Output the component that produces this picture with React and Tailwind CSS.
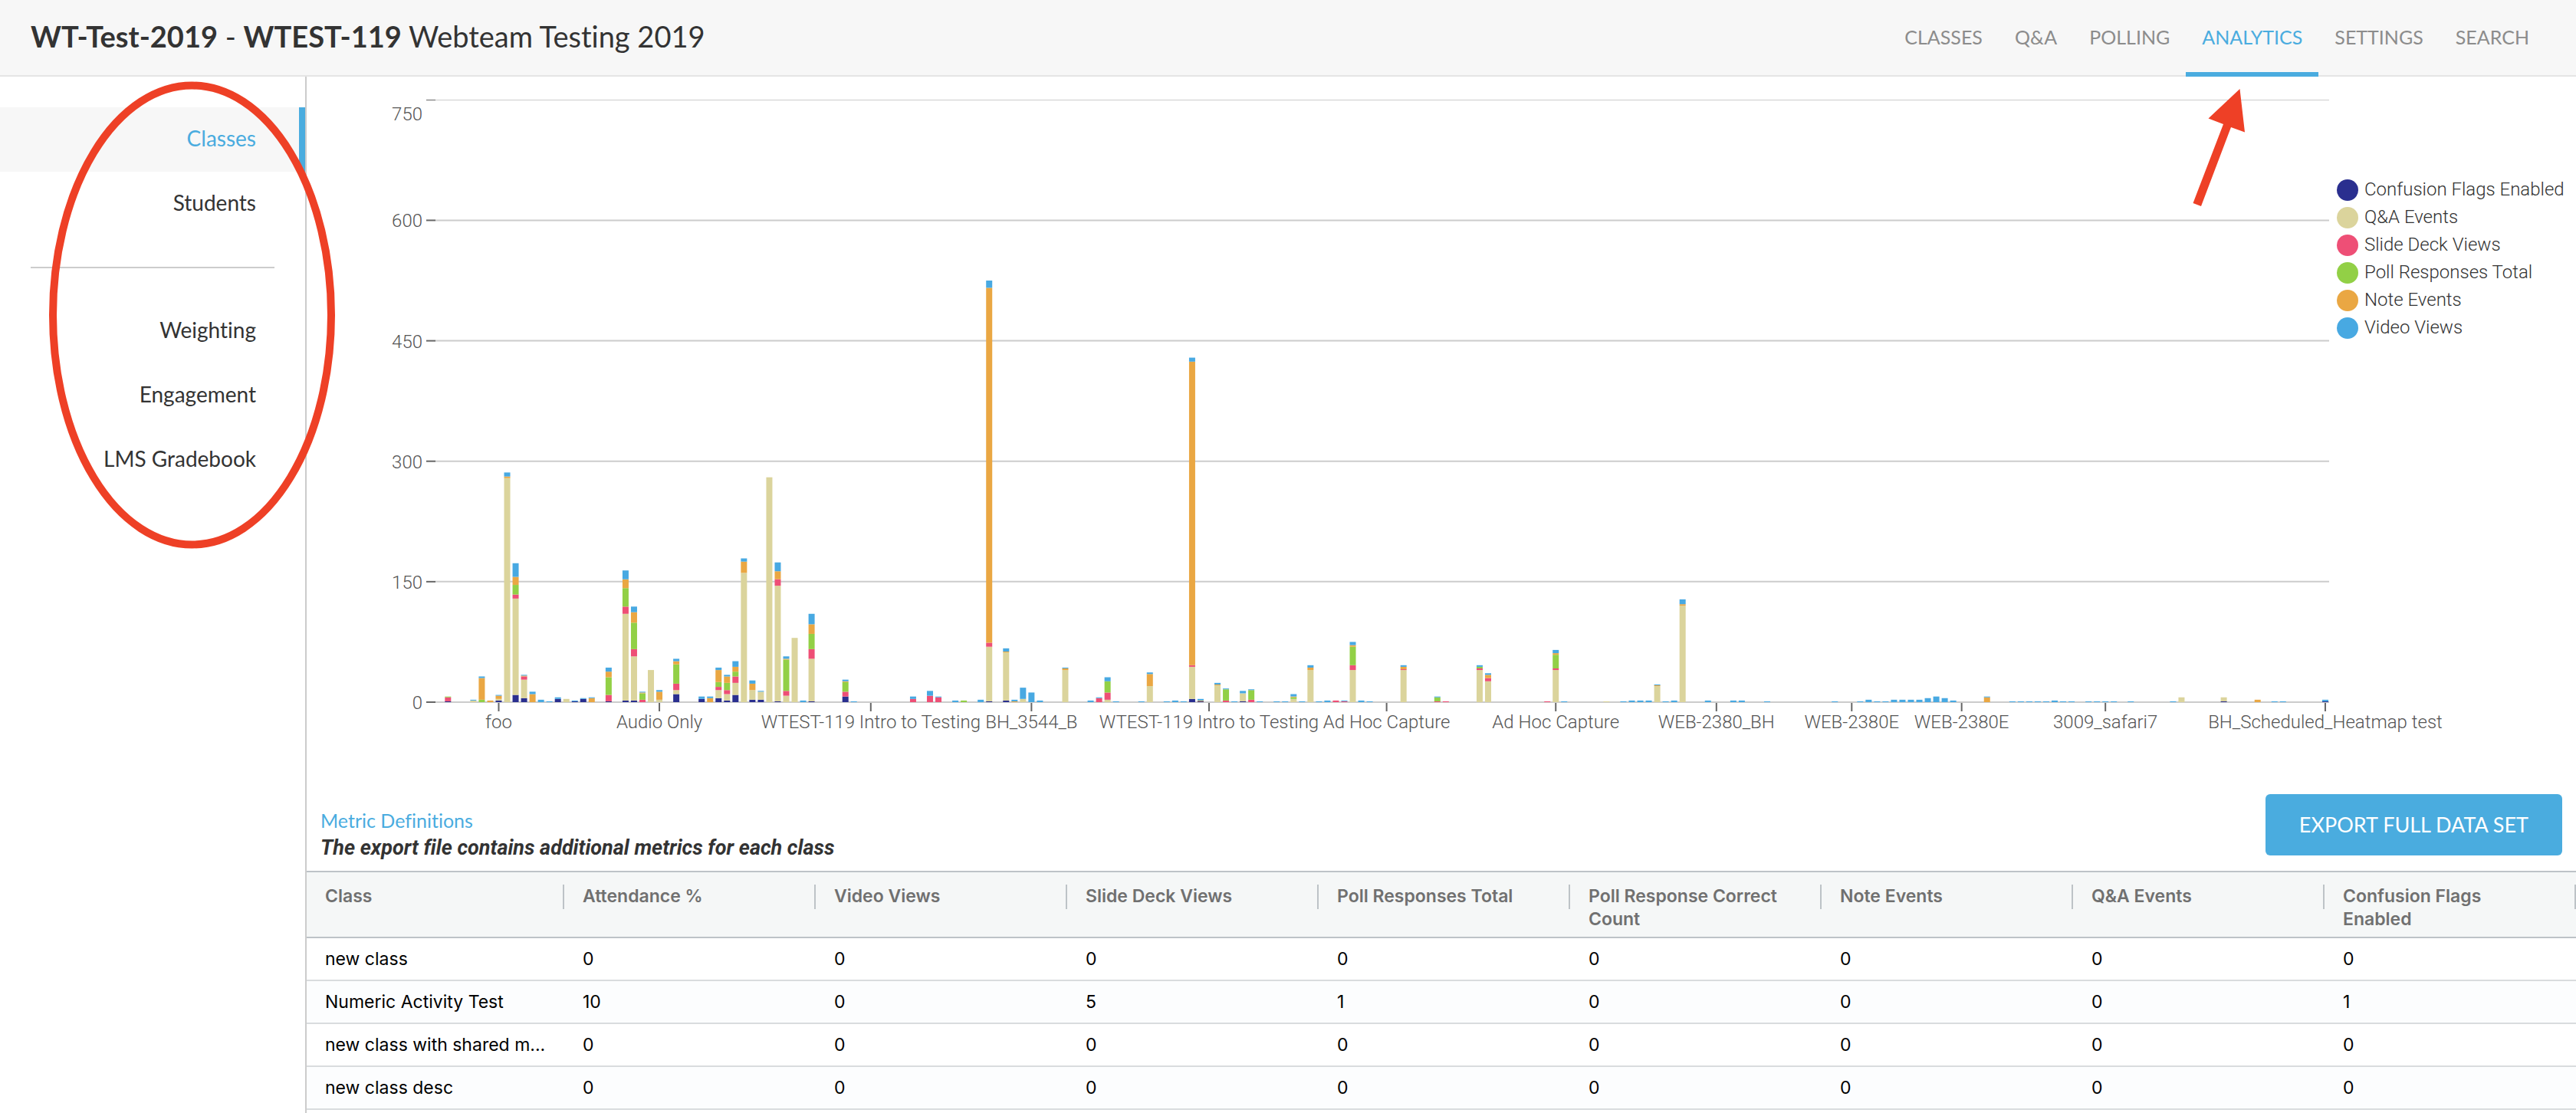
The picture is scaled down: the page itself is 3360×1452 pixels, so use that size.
const COLORS = ["#2a2f8f", "#dbd49c", "#ee4f76", "#92d046", "#eaa743", "#48a9e2"];
const LEGEND = ["Confusion Flags Enabled", "Q&A Events", "Slide Deck Views", "Poll Responses Total", "Note Events", "Video Views"];

// Each entry: [class index, confusion flags, Q&A, slide views, poll responses, notes, videos]
const BARS = [
  [0, 1, 0, 5, 1, 0, 0], [3, 0, 2, 0, 0, 0, 1], [4, 0, 0, 0, 3, 27, 2], [5, 0, 0, 0, 0, 2, 0],
  [6, 2, 2, 0, 0, 4, 1], [7, 0, 279, 0, 0, 2, 5], [8, 9, 120, 5, 12, 10, 17], [9, 5, 23, 4, 0, 1, 1],
  [10, 0, 0, 0, 0, 10, 3], [11, 0, 0, 0, 0, 0, 3], [12, 0, 0, 0, 0, 0, 1], [13, 4, 0, 0, 0, 0, 2],
  [14, 0, 4, 0, 0, 0, 0], [15, 1, 0, 0, 0, 0, 1], [16, 4, 0, 0, 0, 0, 1], [17, 0, 0, 0, 0, 5, 1],
  [19, 1, 0, 8, 22, 7, 5], [21, 2, 108, 9, 23, 11, 11], [22, 2, 55, 9, 33, 13, 7], [23, 0, 0, 3, 8, 1, 1],
  [24, 0, 40, 0, 0, 0, 0], [25, 0, 3, 0, 0, 10, 2], [27, 10, 5, 8, 24, 4, 3], [30, 4, 0, 0, 0, 0, 3],
  [31, 0, 0, 0, 0, 5, 2], [32, 5, 10, 4, 6, 15, 3], [33, 2, 8, 5, 9, 8, 2], [34, 9, 15, 8, 6, 6, 7],
  [35, 0, 161, 0, 0, 14, 4], [36, 3, 12, 0, 0, 8, 4], [37, 3, 10, 0, 0, 0, 1], [38, 0, 280, 0, 0, 0, 0],
  [39, 1, 144, 8, 0, 10, 11], [40, 0, 8, 6, 39, 1, 3], [41, 0, 80, 0, 0, 0, 0], [42, 0, 0, 0, 0, 0, 2],
  [43, 1, 53, 12, 19, 12, 13], [47, 7, 0, 6, 12, 1, 2], [48, 0, 0, 0, 0, 0, 1], [55, 0, 0, 4, 0, 0, 3],
  [57, 0, 0, 8, 0, 0, 6], [58, 0, 0, 6, 0, 0, 1], [60, 0, 0, 0, 0, 0, 2], [61, 0, 0, 0, 2, 0, 0],
  [63, 0, 0, 0, 0, 0, 3], [64, 1, 68, 5, 0, 442, 9], [66, 2, 60, 0, 0, 1, 4], [67, 0, 0, 0, 0, 1, 2],
  [68, 0, 4, 0, 0, 0, 14], [69, 0, 0, 0, 0, 0, 12], [70, 0, 0, 0, 0, 0, 2], [73, 0, 40, 0, 0, 2, 1],
  [76, 0, 0, 0, 0, 0, 2], [77, 0, 0, 5, 0, 0, 1], [78, 0, 3, 9, 14, 0, 5], [79, 0, 0, 0, 0, 0, 1],
  [82, 0, 0, 0, 0, 0, 1], [83, 0, 20, 0, 0, 15, 2], [85, 0, 0, 0, 0, 0, 1], [86, 0, 0, 0, 0, 0, 2],
  [87, 0, 0, 0, 0, 0, 1], [88, 4, 40, 2, 0, 378, 5], [89, 1, 0, 0, 0, 1, 2], [91, 0, 21, 0, 0, 1, 2],
  [92, 0, 0, 2, 14, 0, 1], [93, 0, 0, 0, 0, 0, 1], [94, 1, 10, 0, 0, 0, 3], [95, 0, 0, 3, 12, 0, 1],
  [96, 0, 0, 0, 0, 0, 1], [98, 0, 0, 0, 0, 0, 1], [99, 0, 0, 0, 0, 0, 1], [100, 0, 4, 0, 2, 1, 3],
  [101, 0, 0, 0, 0, 0, 1], [102, 0, 40, 0, 0, 3, 3], [103, 0, 0, 0, 0, 0, 1], [104, 0, 0, 0, 0, 0, 2],
  [105, 0, 0, 2, 0, 0, 0], [106, 0, 0, 1, 0, 0, 1], [107, 0, 40, 6, 23, 2, 4], [108, 0, 0, 0, 0, 0, 2],
  [109, 0, 0, 0, 0, 0, 1], [113, 0, 40, 1, 0, 3, 2], [117, 0, 0, 1, 5, 0, 1], [118, 0, 0, 1, 0, 0, 0],
  [122, 0, 40, 2, 2, 0, 2], [123, 0, 26, 4, 0, 4, 2], [130, 0, 0, 1, 0, 0, 0], [131, 0, 40, 2, 17, 2, 4],
  [132, 0, 0, 0, 0, 0, 1], [137, 0, 1, 0, 0, 0, 0], [139, 0, 0, 0, 0, 0, 1], [140, 0, 0, 0, 0, 0, 2],
  [141, 0, 0, 0, 0, 0, 2], [142, 0, 0, 0, 0, 0, 2], [143, 0, 20, 0, 0, 1, 1], [144, 0, 0, 0, 0, 0, 1],
  [145, 0, 0, 0, 0, 0, 2], [146, 0, 120, 0, 0, 2, 6], [149, 0, 0, 0, 0, 0, 2], [152, 0, 0, 0, 0, 0, 2],
  [153, 0, 0, 0, 0, 0, 2], [156, 0, 0, 0, 0, 0, 1], [164, 0, 0, 0, 0, 0, 1], [167, 0, 0, 0, 0, 0, 1],
  [168, 0, 0, 0, 0, 0, 3], [169, 0, 0, 0, 0, 0, 1], [170, 0, 0, 0, 0, 0, 1], [171, 0, 0, 0, 0, 0, 3],
  [172, 0, 0, 0, 0, 0, 3], [173, 0, 0, 0, 0, 0, 3], [174, 0, 0, 0, 0, 0, 3], [175, 0, 0, 0, 0, 0, 5],
  [176, 0, 0, 0, 0, 0, 7], [177, 0, 0, 0, 0, 0, 5], [178, 0, 0, 0, 0, 0, 2], [182, 0, 0, 0, 0, 6, 1],
  [185, 0, 0, 0, 0, 0, 1], [186, 0, 0, 0, 0, 0, 1], [187, 0, 0, 0, 0, 0, 1], [188, 0, 0, 0, 0, 0, 1],
  [189, 0, 0, 0, 0, 0, 1], [190, 0, 0, 0, 0, 0, 2], [191, 0, 0, 0, 0, 0, 1], [192, 0, 0, 0, 0, 0, 1],
  [194, 0, 0, 0, 0, 0, 1], [195, 0, 0, 0, 0, 0, 1], [196, 0, 0, 0, 0, 0, 1], [197, 0, 0, 0, 0, 0, 1],
  [199, 0, 0, 0, 0, 0, 1], [204, 0, 0, 0, 0, 0, 1], [205, 0, 6, 0, 0, 0, 0], [210, 1, 5, 0, 0, 0, 0],
  [214, 0, 0, 0, 0, 3, 0], [216, 0, 0, 0, 0, 0, 1], [217, 0, 0, 0, 0, 0, 1], [222, 1, 0, 0, 0, 0, 2],
];

const X_LABELS = [
  [6, "foo"], [25, "Audio Only"], [50, "WTEST-119 Intro to Testing"], [69, "BH_3544_B"],
  [90, "WTEST-119 Intro to Testing"], [111, "Ad Hoc Capture"], [131, "Ad Hoc Capture"],
  [150, "WEB-2380_BH"], [166, "WEB-2380E"], [179, "WEB-2380E"], [196, "3009_safari7"],
  [222, "BH_Scheduled_Heatmap test"],
];

const BASE = 816;
const UNIT = 1.0476;
const xOf = (i) => 184.3 + i * 11.03;
const yOf = (v) => BASE - v * UNIT;

function Chart() {
  return (
    <svg viewBox="0 0 2640 880" className="min-w-0 flex-1 overflow-visible font-['Roboto',sans-serif] font-light" role="img" aria-label="Class metrics">
      {[0, 150, 300, 450, 600, 750].map((v) => {
        const top = v === 750;
        const y = top ? 30.5 : yOf(v);
        return (
          <g key={v}>
            <line x1="168" x2="2638" y1={y} y2={y} stroke="#cccccc" strokeWidth={top ? 1 : 2} />
            <line x1="156" x2="168" y1={y} y2={y} stroke="#666666" strokeWidth={top ? 1 : 2} />
            <text x="151" y={top ? 57 : y + 9} textAnchor="end" fontSize="24" fill="#555555">{v}</text>
          </g>
        );
      })}
      {BARS.map(([i, ...parts]) => {
        let sum = 0;
        return parts.map((p, k) => {
          sum += p;
          return p ? <rect key={`${i}-${k}`} x={xOf(i) - 4} y={yOf(sum)} width="8" height={p * UNIT} fill={COLORS[k]} /> : null;
        });
      })}
      {X_LABELS.map(([i, label]) => (
        <g key={i}>
          <line x1={xOf(i)} x2={xOf(i)} y1="817" y2="828" stroke="#666666" strokeWidth="2" />
          <text x={xOf(i)} y="850" textAnchor="middle" fontSize="24" fill="#555555">{label}</text>
        </g>
      ))}
    </svg>
  );
}

const NAV = ["CLASSES", "Q&A", "POLLING", "ANALYTICS", "SETTINGS", "SEARCH"];

function Header() {
  return (
    <header className="relative flex h-[100px] justify-between border-b-2 border-[#e5e5e5] bg-[#f7f7f7] px-10">
      <h1 className="flex items-center whitespace-pre pb-1 text-[38px] leading-none text-[#333333]">
        <span><b>WT-Test-2019</b> - <b>WTEST-119</b> Webteam Testing 2019</span>
      </h1>
      <nav className="-mb-0.5 flex">
        {NAV.map((n) => (
          <a
            key={n}
            href="#"
            className={
              n === "ANALYTICS"
                ? "flex items-center border-b-6 border-[#4aacdf] px-[21px] pt-1 text-[25px] text-[#4aacdf]"
                : "flex items-center border-b-6 border-transparent px-[21px] pt-1 text-[25px] text-[#8c8c8c]"
            }
          >
            {n}
          </a>
        ))}
      </nav>
      <svg className="pointer-events-none absolute right-[430px] top-[114px] z-10 h-[156px] w-[72px]" viewBox="0 0 72 156" aria-hidden="true">
        <path d="M63.500 2 L22.500 40.500 L42 48 L2.500 151 L13 155 L52 52 L70 58.500 Z" fill="#ee4026" />
      </svg>
    </header>
  );
}

function SideLink({ label, active }) {
  return (
    <a
      href="#"
      className={
        active
          ? "flex h-[84px] items-center justify-end border-r-8 border-[#4aacdf] bg-[#f7f7f7] pb-1 pr-14 text-[28px] text-[#4aacdf]"
          : "flex h-[84px] items-center justify-end pb-1 pr-16 text-[28px] text-[#333333]"
      }
    >
      {label}
    </a>
  );
}

function Sidebar() {
  return (
    <aside className="relative w-[400px] shrink-0 border-r-2 border-[#cccccc] pt-10">
      <SideLink label="Classes" active />
      <SideLink label="Students" />
      <hr className="mx-10 my-10 border-t-2 border-[#cccccc]" />
      <SideLink label="Weighting" />
      <SideLink label="Engagement" />
      <SideLink label="LMS Gradebook" />
      <svg className="pointer-events-none absolute left-[60px] top-0 z-10 h-[620px] w-[380px]" viewBox="0 0 380 620" aria-hidden="true">
        <ellipse cx="190.500" cy="311" rx="181.500" ry="299.500" fill="none" stroke="#ee4026" strokeWidth="10" />
      </svg>
    </aside>
  );
}

const COLUMNS = ["Class", "Attendance %", "Video Views", "Slide Deck Views", "Poll Responses Total", "Poll Response Correct Count", "Note Events", "Q&A Events", "Confusion Flags Enabled"];
const ROWS = [
  ["new class", 0, 0, 0, 0, 0, 0, 0, 0],
  ["Numeric Activity Test", 10, 0, 5, 1, 0, 0, 0, 1],
  ["new class with shared m...", 0, 0, 0, 0, 0, 0, 0, 0],
  ["new class desc", 0, 0, 0, 0, 0, 0, 0, 0],
];

function DataTable() {
  return (
    <table className="w-full table-fixed border-separate border-spacing-0 text-left font-['Inter',sans-serif]">
      <thead>
        <tr className="bg-[#f5f7f7]">
          {COLUMNS.map((c, i) => (
            <th
              key={c}
              scope="col"
              className={
                i === 0
                  ? "h-[88px] w-[336px] border-y-2 border-[#bdc3c7] pl-6 pt-4 align-top text-[23px] font-semibold leading-[30px] text-[#707070]"
                  : "h-[88px] border-y-2 border-[#bdc3c7] pl-6 pt-4 align-top text-[23px] font-semibold leading-[30px] text-[#707070]"
              }
            >
              <div className="flex justify-between gap-8">
                <span>{c}</span>
                <span className="h-8 w-0.5 shrink-0 bg-[#bdc3c7]" />
              </div>
            </th>
          ))}
        </tr>
      </thead>
      <tbody>
        {ROWS.map((r) => (
          <tr key={r[0]} className="odd:bg-white even:bg-[#fcfdfe]">
            {r.map((v, i) => (
              <td key={i} className="h-14 whitespace-nowrap border-b-2 border-[#d9dcde] pl-6 text-[23px] leading-[30px] text-black">{v}</td>
            ))}
          </tr>
        ))}
      </tbody>
    </table>
  );
}

export default function App() {
  return (
    <div className="flex min-h-screen flex-col bg-white font-['Lato',sans-serif] [font-variant-ligatures:none]">
      <Header />
      <div className="flex flex-1">
        <Sidebar />
        <main className="min-w-0 flex-1">
          <section className="flex items-start">
            <Chart />
            <ul className="w-[320px] shrink-0 pl-2 pt-[130px] font-['Roboto',sans-serif] font-light">
              {LEGEND.map((l, i) => (
                <li key={l} className="flex h-9 items-center gap-2 text-[24px] leading-none text-[#333333]">
                  <span className="size-7 shrink-0 rounded-full" style={{ backgroundColor: COLORS[i] }} />
                  <span className="whitespace-nowrap pb-0.5">{l}</span>
                </li>
              ))}
            </ul>
          </section>
          <section className="flex items-end justify-between px-[18px] pb-3 pt-14">
            <div className="leading-9">
              <a href="#" className="block text-[25px] text-[#4aacdf]">Metric Definitions</a>
              <p className="font-['Roboto',sans-serif] text-[27px] font-bold italic text-[#333333]">The export file contains additional metrics for each class</p>
            </div>
            <button type="button" className="mb-2 h-20 rounded-md bg-[#4aacdf] px-11 text-[27px] text-white">EXPORT FULL DATA SET</button>
          </section>
          <DataTable />
        </main>
      </div>
    </div>
  );
}
